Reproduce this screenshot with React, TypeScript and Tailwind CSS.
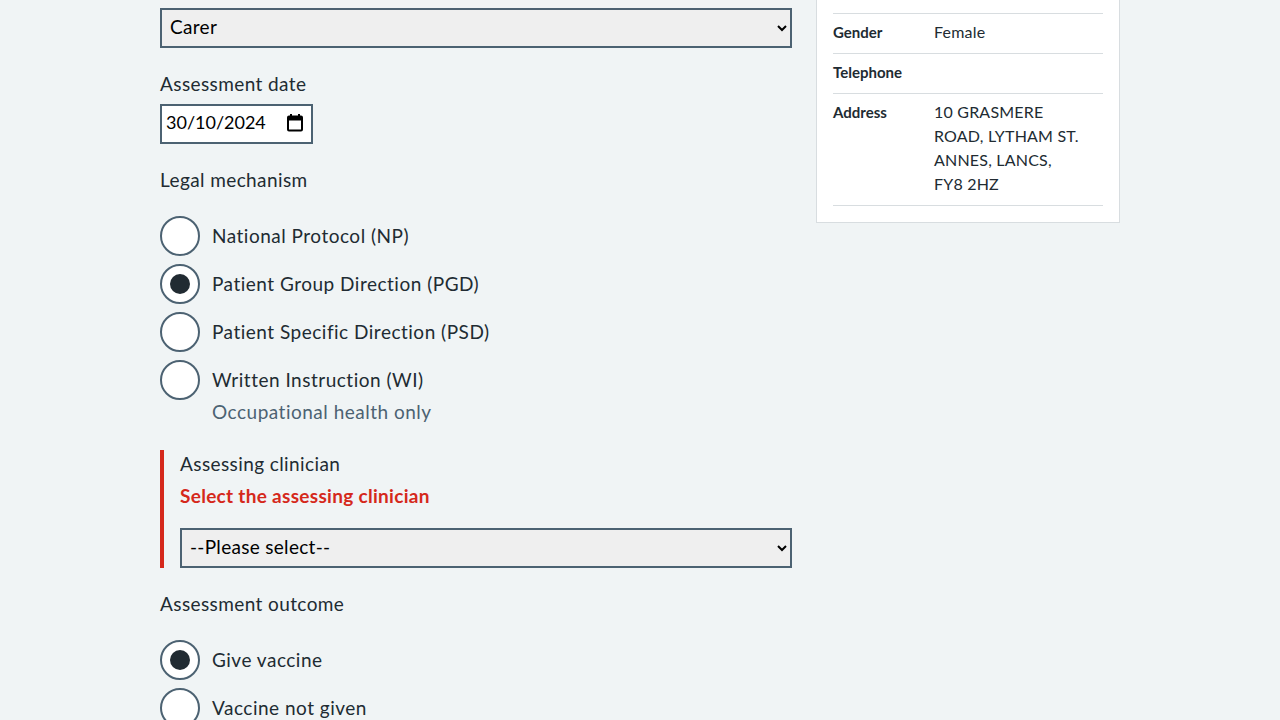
import React from 'react';

const Radio = ({ label, checked, hint }: { label: string; checked?: boolean; hint?: string }) => (
  <div className="flex items-start gap-3">
    <div className="w-10 h-10 shrink-0 rounded-full border-2 border-[#4c6272] bg-white flex items-center justify-center">
      {checked && <div className="w-5 h-5 rounded-full bg-[#212b32]" />}
    </div>
    <div className="pt-[6px] tracking-[0.5px]">
      <div className="text-[19px] leading-7 text-[#212b32]">{label}</div>
      {hint && <div className="text-[19px] leading-7 text-[#4c6272] mt-[4px]">{hint}</div>}
    </div>
  </div>
);

const Row = ({ k, v }: { k: string; v?: React.ReactNode }) => (
  <div className="flex border-b border-[#d8dde0] pt-[6px] pb-[9px]">
    <div className="w-[101px] shrink-0 text-[15px] leading-6 font-bold text-[#212b32]">{k}</div>
    <div className="flex-1 text-[16px] leading-6 text-[#212b32] pr-2 tracking-[0.2px]">{v}</div>
  </div>
);

const NativeSelect = ({ value, className }: { value: string; className?: string }) => (
  <select
    defaultValue={value}
    className={`h-10 border-2 border-[#4c6272] bg-[#efefef] text-[19px] leading-6 text-black pl-1 pr-2 pb-[3px] tracking-[0.3px] ${className ?? ''}`}
    style={{ appearance: 'auto' }}
  >
    <option>{value}</option>
  </select>
);

export default function App() {
  return (
    <div
      className="min-h-[720px] h-[720px] overflow-hidden bg-[#f0f4f5] text-[#212b32]"
      style={{ fontFamily: 'Lato, "Noto Sans", sans-serif' }}
    >
      <div className="w-[960px] mx-auto flex gap-6">
        <div className="w-[632px] shrink-0 pt-2">
          <NativeSelect value="Carer" className="w-full" />

          <div className="mt-[22px] text-[19px] leading-7 tracking-[0.4px]">Assessment date</div>
          <div className="mt-[6px] w-[153px] h-10 border-2 border-[#4c6272] bg-white flex items-center justify-between pl-1 pr-2">
            <span className="text-[18px] text-black -mt-[4px]">30/10/2024</span>
            <svg width="16" height="18" viewBox="0 0 16 18" className="-mt-[2px]">
              <rect x="1" y="2.5" width="14" height="14" rx="1" fill="none" stroke="#000" strokeWidth="2" />
              <rect x="1" y="2.5" width="14" height="4" fill="#000" />
              <rect x="3" y="0" width="2" height="3" fill="#000" />
              <rect x="11" y="0" width="2" height="3" fill="#000" />
            </svg>
          </div>

          <div className="mt-[22px] text-[19px] leading-7 tracking-[0.4px]">Legal mechanism</div>
          <div className="mt-[22px] flex flex-col gap-2">
            <Radio label="National Protocol (NP)" />
            <Radio label="Patient Group Direction (PGD)" checked />
            <Radio label="Patient Specific Direction (PSD)" />
            <Radio label="Written Instruction (WI)" hint="Occupational health only" />
          </div>

          <div className="mt-[28px] border-l-4 border-[#d5281b] pl-4">
            <div className="text-[19px] leading-7 -mt-[4px] tracking-[0.4px]">Assessing clinician</div>
            <div className="text-[19px] leading-7 font-bold text-[#d5281b] mt-1 tracking-[0.3px]">
              Select the assessing clinician
            </div>
            <NativeSelect value="--Please select--" className="w-full mt-[18px] block" />
          </div>

          <div className="mt-[22px] text-[19px] leading-7 tracking-[0.4px]">Assessment outcome</div>
          <div className="mt-[22px] flex flex-col gap-2">
            <Radio label="Give vaccine" checked />
            <Radio label="Vaccine not given" />
          </div>
        </div>

        {/* patient summary card, scrolled past its top rows */}
        <div className="w-[304px] shrink-0 self-start -mt-[20px] bg-white border border-[#d8dde0] px-4 pt-4 pb-4">
          <div className="h-[17px] border-b border-[#d8dde0]" />
          <Row k="Gender" v="Female" />
          <Row k="Telephone" />
          <Row
            k="Address"
            v={
              <>
                10 GRASMERE
                <br />
                ROAD, LYTHAM ST.
                <br />
                ANNES, LANCS,
                <br />
                FY8 2HZ
              </>
            }
          />
        </div>
      </div>
    </div>
  );
}
